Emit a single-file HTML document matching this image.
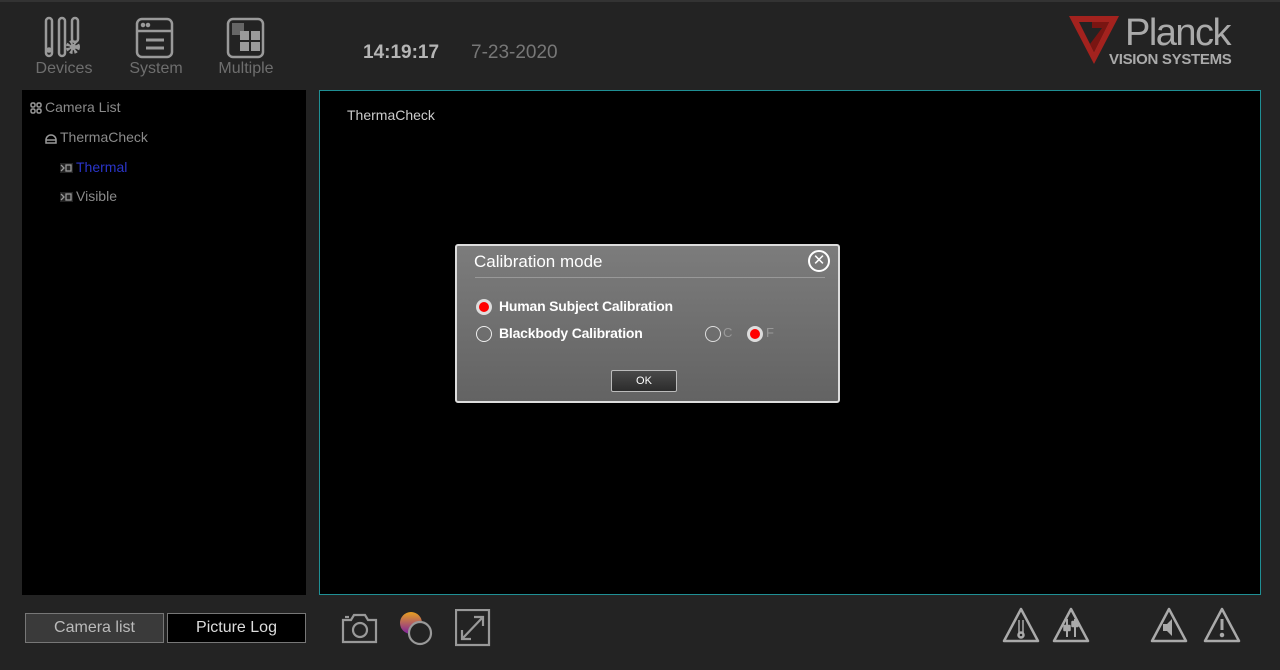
<!DOCTYPE html>
<html><head><meta charset="utf-8"><style>
*{margin:0;padding:0;box-sizing:border-box}
body{width:1280px;height:670px;background:#232323;font-family:"Liberation Sans",sans-serif;position:relative;overflow:hidden;color:#aaa}
.abs{position:absolute}
.nav{color:#6e6e6e;font-size:16px;text-align:center}
.tree{font-size:14px;color:#8a8a8a}
.ti{display:inline-block;vertical-align:-2px;margin-right:3px}
</style></head><body>
<div class="abs" style="left:0;top:0;width:1280px;height:2px;background:#333"></div>
<svg class="abs" style="left:40px;top:16px" width="50" height="44" viewBox="0 0 50 44" fill="none" stroke="#9a9a9a" stroke-width="2.5">
<rect x="6" y="2" width="6" height="38" rx="3"/><rect x="19" y="2" width="6" height="38" rx="3"/><rect x="32" y="2" width="6" height="24" rx="3"/>
<circle cx="9" cy="34" r="1.5" fill="#9a9a9a"/>
<circle cx="33" cy="31" r="5" stroke-width="4" stroke-dasharray="2.5 1.6"/><circle cx="33" cy="31" r="2" fill="#9a9a9a"/>
</svg>
<div class="abs nav" style="left:28px;top:60px;width:72px">Devices</div>
<svg class="abs" style="left:135px;top:17px" width="40" height="42" viewBox="0 0 40 42" fill="none" stroke="#9a9a9a" stroke-width="2.5">
<rect x="2" y="2" width="35" height="38" rx="5"/><line x1="2" y1="14" x2="37" y2="14"/>
<line x1="11" y1="23" x2="29" y2="23" stroke-width="3"/><line x1="11" y1="31" x2="29" y2="31" stroke-width="3"/>
<circle cx="8" cy="8" r="1" fill="#9a9a9a"/><circle cx="13" cy="8" r="1" fill="#9a9a9a"/>
</svg>
<div class="abs nav" style="left:120px;top:60px;width:72px">System</div>
<svg class="abs" style="left:226px;top:17px" width="40" height="42" viewBox="0 0 40 42">
<rect x="2" y="2" width="35" height="38" rx="5" fill="none" stroke="#9a9a9a" stroke-width="2.5"/>
<rect x="6" y="6" width="12" height="12" fill="#666"/>
<rect x="14" y="14" width="9" height="9" fill="#9a9a9a"/><rect x="25" y="14" width="9" height="9" fill="#9a9a9a"/>
<rect x="14" y="25" width="9" height="9" fill="#9a9a9a"/><rect x="25" y="25" width="9" height="9" fill="#9a9a9a"/>
</svg>
<div class="abs nav" style="left:210px;top:60px;width:72px">Multiple</div>
<div class="abs" style="left:363px;top:42px;font-size:19px;color:#b5b5b5;font-weight:bold">14:19:17</div>
<div class="abs" style="left:471px;top:42px;font-size:19px;color:#777">7-23-2020</div>
<svg class="abs" style="left:1066px;top:14px" width="58" height="52" viewBox="0 0 58 52">
<polygon points="3,2 53,2 28,50" fill="#a3221e"/><polygon points="13,8 43,8 28,38" fill="#232323"/>
<polygon points="26,8 43,8 28,38 24,30 36,14 26,14" fill="#7a1512"/>
</svg>
<div class="abs" style="left:1125px;top:12px;font-size:38px;color:#aaa;letter-spacing:-1.5px">Planck</div>
<div class="abs" style="left:1109px;top:51px;font-size:15px;color:#aaa;font-weight:bold;letter-spacing:-0.3px">VISION SYSTEMS</div>
<div class="abs" style="left:22px;top:90px;width:284px;height:505px;background:#000"></div>
<div class="abs tree" style="left:30px;top:99px"><svg class="ti" width="12" height="12" viewBox="0 0 12 12" fill="none" stroke="#999" stroke-width="1.5"><rect x="1" y="1" width="4" height="4" rx="1.5"/><rect x="7" y="1" width="4" height="4" rx="1.5"/><rect x="1" y="7" width="4" height="4" rx="1.5"/><rect x="7" y="7" width="4" height="4" rx="1.5"/></svg>Camera List</div>
<div class="abs tree" style="left:45px;top:129px"><svg class="ti" width="12" height="12" viewBox="0 0 12 12" fill="none" stroke="#999" stroke-width="1.5"><path d="M1 8a5 5 0 0 1 10 0v3H1z"/><line x1="1" y1="8" x2="11" y2="8"/></svg>ThermaCheck</div>
<div class="abs tree" style="left:60px;top:159px;color:#2a35c9"><svg class="ti" width="13" height="12" viewBox="0 0 13 12" fill="none" stroke="#999" stroke-width="1.3"><rect x="0" y="1" width="13" height="10" fill="#222" stroke="none"/><path d="M1 3l3 3-3 3"/><rect x="6" y="3" width="5" height="6"/></svg>Thermal</div>
<div class="abs tree" style="left:60px;top:188px"><svg class="ti" width="13" height="12" viewBox="0 0 13 12" fill="none" stroke="#999" stroke-width="1.3"><rect x="0" y="1" width="13" height="10" fill="#222" stroke="none"/><path d="M1 3l3 3-3 3"/><rect x="6" y="3" width="5" height="6"/></svg>Visible</div>
<div class="abs" style="left:319px;top:90px;width:942px;height:505px;background:#000;border:1px solid #1f8f94"></div>
<div class="abs" style="left:347px;top:107px;font-size:14px;color:#ccc">ThermaCheck</div>
<div class="abs" style="left:455px;top:244px;width:385px;height:159px;border:2px solid #ddd;border-radius:3px;background:linear-gradient(#7c7c7c,#636363)"></div>
<div class="abs" style="left:474px;top:252px;font-size:17px;color:#fff">Calibration mode</div>
<div class="abs" style="left:808px;top:250px;width:22px;height:22px;border:2px solid #fff;border-radius:50%;color:#fff;font-size:15px;text-align:center;line-height:18px">✕</div>
<div class="abs" style="left:475px;top:277px;width:350px;height:1px;background:#999"></div>
<div class="abs" style="left:476px;top:299px;width:16px;height:16px;border-radius:50%;background:#f00;border:3px solid #ddd"></div>
<div class="abs" style="left:499px;top:298px;font-size:14px;color:#fff;font-weight:bold;letter-spacing:-0.2px">Human Subject Calibration</div>
<div class="abs" style="left:476px;top:326px;width:16px;height:16px;border-radius:50%;border:1.5px solid #eee"></div>
<div class="abs" style="left:499px;top:325px;font-size:14px;color:#fff;font-weight:bold;letter-spacing:-0.2px">Blackbody Calibration</div>
<div class="abs" style="left:705px;top:326px;width:16px;height:16px;border-radius:50%;border:1.5px solid #ddd"></div>
<div class="abs" style="left:723px;top:325px;font-size:13px;color:#999">C</div>
<div class="abs" style="left:747px;top:326px;width:16px;height:16px;border-radius:50%;background:#f00;border:3px solid #ddd"></div>
<div class="abs" style="left:766px;top:325px;font-size:13px;color:#999">F</div>
<div class="abs" style="left:611px;top:370px;width:66px;height:22px;background:linear-gradient(#4a4a4a,#2c2c2c);border:1px solid #bbb;border-radius:2px;color:#fff;font-size:11px;text-align:center;line-height:20px">OK</div>
<div class="abs" style="left:25px;top:613px;width:139px;height:30px;background:#3a3a3a;border:1px solid #777;color:#bbb;font-size:16px;text-align:center;line-height:28px">Camera list</div>
<div class="abs" style="left:167px;top:613px;width:139px;height:30px;background:#000;border:1px solid #777;color:#ddd;font-size:16px;text-align:center;line-height:28px">Picture Log</div>
<svg class="abs" style="left:340px;top:610px" width="40" height="36" viewBox="0 0 40 36" fill="none" stroke="#999" stroke-width="2.2">
<path d="M3 10h8l3-5h11l3 5h8v22H3z"/><circle cx="20" cy="20" r="7"/><line x1="5" y1="7" x2="9" y2="7"/></svg>
<svg class="abs" style="left:398px;top:609px" width="36" height="38" viewBox="0 0 36 38">
<defs><linearGradient id="g" x1="0" y1="0" x2="0" y2="1"><stop offset="0" stop-color="#e8a020"/><stop offset="1" stop-color="#8020a0"/></linearGradient></defs>
<circle cx="13" cy="14" r="11" fill="url(#g)"/><circle cx="22" cy="24" r="11" fill="#232323" stroke="#999" stroke-width="2.2"/></svg>
<svg class="abs" style="left:455px;top:609px" width="36" height="38" viewBox="0 0 36 38" fill="none" stroke="#999" stroke-width="2.2">
<rect x="1" y="1" width="33" height="35"/><path d="M7 30L28 8M19 8h9v9M7 21v9h9"/></svg>
<svg class="abs" style="left:1000px;top:606px" width="260" height="42" viewBox="0 0 260 42" fill="none" stroke="#aaa" stroke-width="2.5" stroke-linejoin="round">
<path d="M21 3L38 35H4z"/><path d="M71 3L88 35H54z"/><path d="M169 3L186 35H152z"/><path d="M222 3L239 35H205z"/>
<path d="M19 14v13M23 14v13" stroke-width="1.5"/><circle cx="21" cy="29" r="2.5"/>
<path d="M67 13v18M75 13v18" stroke-width="2"/><rect x="64.5" y="20" width="5" height="4" fill="#aaa"/><rect x="72.5" y="16" width="5" height="4" fill="#aaa"/>
<path d="M163 18h4l5-5v17l-5-5h-4z" fill="#aaa" stroke="none"/>
<path d="M222 13v11" stroke-width="3"/><circle cx="222" cy="29" r="1" fill="#aaa"/>
</svg>
</body></html>
